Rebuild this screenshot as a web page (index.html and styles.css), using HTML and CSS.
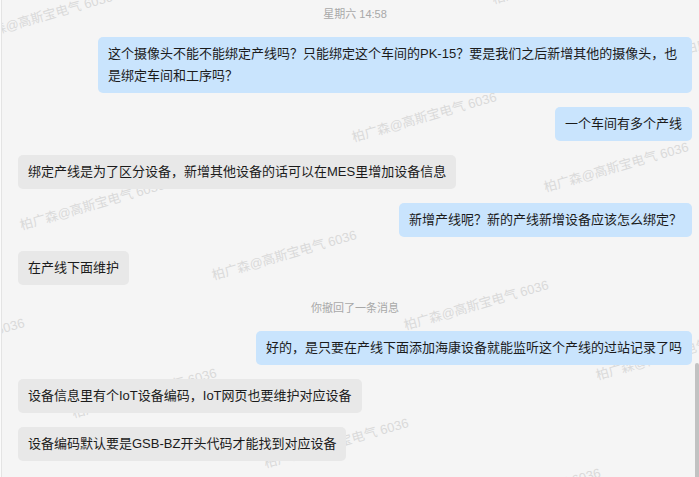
FILE: index.html
```html
<!DOCTYPE html>
<html lang="zh-CN">
<head>
    <meta charset="UTF-8">
    <meta name="viewport" content="width=device-width, initial-scale=1.0">
    <title>会话</title>
    <link rel="stylesheet" href="styles.css">
</head>
<body>
    <div class="pane">
        <div class="watermark" id="watermark"></div>
        <div class="chat">
            <div class="time">星期六 14:58</div>
            <div class="msg mine">这个摄像头不能不能绑定产线吗？只能绑定这个车间的PK-15？要是我们之后新增其他的摄像头，也是绑定车间和工序吗？</div>
            <div class="msg mine">一个车间有多个产线</div>
            <div class="msg theirs">绑定产线是为了区分设备，新增其他设备的话可以在MES里增加设备信息</div>
            <div class="msg mine">新增产线呢？新的产线新增设备应该怎么绑定？</div>
            <div class="msg theirs">在产线下面维护</div>
            <div class="note">你撤回了一条消息</div>
            <div class="msg mine">好的，是只要在产线下面添加海康设备就能监听这个产线的过站记录了吗</div>
            <div class="msg theirs">设备信息里有个IoT设备编码，IoT网页也要维护对应设备</div>
            <div class="msg theirs">设备编码默认要是GSB-BZ开头代码才能找到对应设备</div>
        </div>
        <div class="scroll-thumb"></div>
    </div>

    <script>
        // tile the watermark text across the pane
        const layer = document.getElementById('watermark');
        const label = '柏广森@高斯宝电气 6036';
        const origin = [20, 232];
        const stepA = [192, 50];
        const stepB = [52, 188];

        for (let i = -4; i <= 5; i++) {
            for (let j = -3; j <= 3; j++) {
                const x = origin[0] + i * stepA[0] + j * stepB[0];
                const y = origin[1] + i * stepA[1] + j * stepB[1];
                if (x < -200 || x > 720 || y < -20 || y > 560) continue;
                const mark = document.createElement('span');
                mark.className = 'mark';
                mark.textContent = label;
                mark.style.left = x + 'px';
                mark.style.top = (y - 13) + 'px';
                layer.appendChild(mark);
            }
        }
    </script>
</body>
</html>
```

FILE: styles.css
```css
html, body {
    margin: 0;
    height: 100%;
}

body {
    background-color: #fbfbfb;
    font-family: "Liberation Sans", "Noto Sans CJK SC", sans-serif;
    overflow: hidden;
}

.pane {
    position: relative;
    height: 100%;
    margin-left: 1px;
    border-left: 1px solid #e4e4e4;
    background-color: #f5f5f5;
    overflow: hidden;
}

.watermark {
    position: absolute;
    inset: 0;
    pointer-events: none;
}

.mark {
    position: absolute;
    font-size: 13px;
    line-height: 13px;
    white-space: nowrap;
    color: #dadada;
    transform: rotate(-16deg);
    transform-origin: 0 100%;
}

.chat {
    position: relative;
    z-index: 1;
    display: flex;
    flex-direction: column;
    gap: 14px;
    padding: 5px 7px 0 16px;
}

.time,
.note {
    align-self: center;
    font-size: 11px;
    line-height: 18px;
    color: #a8a8a8;
}

.msg {
    max-width: 594px;
    box-sizing: border-box;
    padding: 6px 10px;
    font-size: 13px;
    line-height: 22px;
    color: #1b1b1b;
    border-radius: 5px;
}

.mine {
    align-self: flex-end;
    background-color: #c9e4fd;
}

.theirs {
    align-self: flex-start;
    background-color: #e8e8e8;
}

.scroll-thumb {
    position: absolute;
    right: 0;
    top: 363px;
    bottom: 0;
    width: 4px;
    background-color: #c2c2c2;
    border-radius: 2px 2px 0 0;
}
```
